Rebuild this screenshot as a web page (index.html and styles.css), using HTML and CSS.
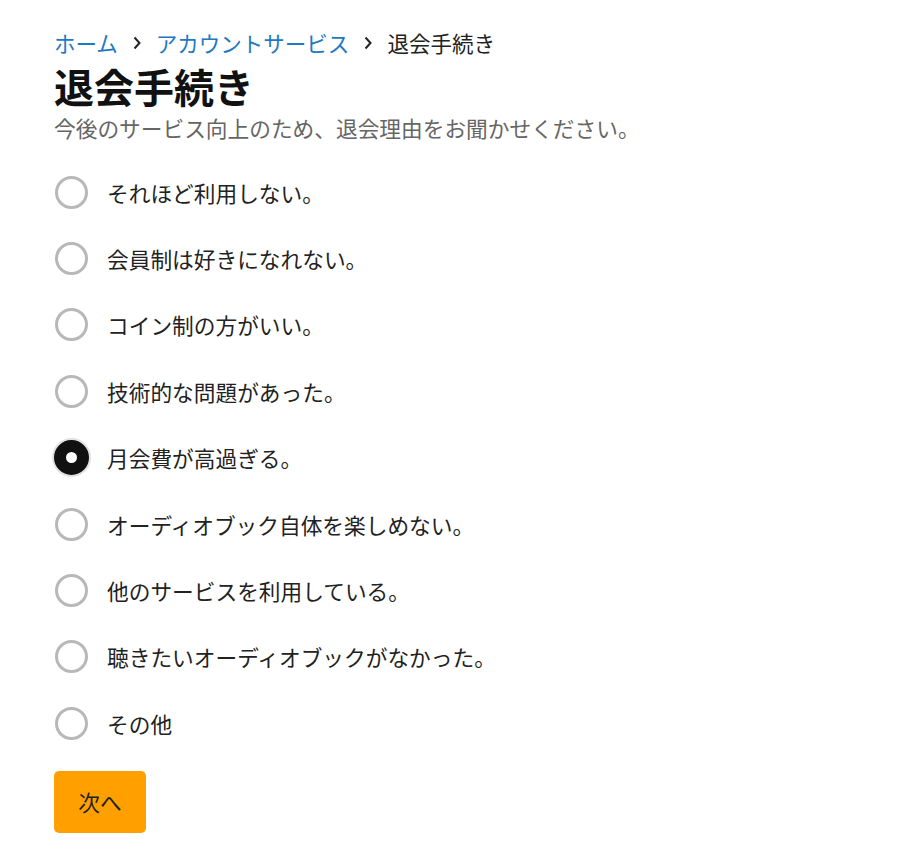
FILE: index.html
```html
<!DOCTYPE html>
<html lang="ja">
<head>
  <meta charset="UTF-8">
  <meta name="viewport" content="width=device-width, initial-scale=1.0">
  <title>退会手続き</title>
  <link rel="stylesheet" href="styles.css">
</head>
<body>
  <div class="container">
    <nav class="breadcrumb">
      <a href="#">ホーム</a>
      <svg class="sep" viewBox="0 0 8 14" width="8" height="14"><path d="M1.5 1.5 L6.5 7 L1.5 12.5" /></svg>
      <a href="#">アカウントサービス</a>
      <svg class="sep" viewBox="0 0 8 14" width="8" height="14"><path d="M1.5 1.5 L6.5 7 L1.5 12.5" /></svg>
      <span class="current">退会手続き</span>
    </nav>
    <h1>退会手続き</h1>
    <p class="lead">今後のサービス向上のため、退会理由をお聞かせください。</p>

    <form class="reasons">
      <label class="reason"><input type="radio" name="reason"><span class="mark"></span>それほど利用しない。</label>
      <label class="reason"><input type="radio" name="reason"><span class="mark"></span>会員制は好きになれない。</label>
      <label class="reason"><input type="radio" name="reason"><span class="mark"></span>コイン制の方がいい。</label>
      <label class="reason"><input type="radio" name="reason"><span class="mark"></span>技術的な問題があった。</label>
      <label class="reason"><input type="radio" name="reason" checked><span class="mark"></span>月会費が高過ぎる。</label>
      <label class="reason"><input type="radio" name="reason"><span class="mark"></span>オーディオブック自体を楽しめない。</label>
      <label class="reason"><input type="radio" name="reason"><span class="mark"></span>他のサービスを利用している。</label>
      <label class="reason"><input type="radio" name="reason"><span class="mark"></span>聴きたいオーディオブックがなかった。</label>
      <label class="reason"><input type="radio" name="reason"><span class="mark"></span>その他</label>
      <div class="form-actions">
        <button type="button">次へ</button>
      </div>
    </form>
  </div>
</body>
</html>
```

FILE: styles.css
```css
body {
  font-family: "Noto Sans CJK JP", "Noto Sans", sans-serif;
  margin: 0;
  padding: 0;
  background-color: #fff;
  color: #1a1a1a;
}
.container {
  padding: 28px 54px 20px;
}
.breadcrumb {
  display: flex;
  align-items: center;
  gap: 15px;
  font-size: 21.5px;
  line-height: 30px;
}
.breadcrumb a {
  color: #2079c2;
  text-decoration: none;
}
.breadcrumb .sep {
  fill: none;
  stroke: #222;
  stroke-width: 2;
}
.breadcrumb .current {
  color: #222;
}
h1 {
  margin: 0;
  font-size: 40px;
  line-height: 56px;
  font-weight: bold;
  color: #111;
}
.lead {
  margin: 0 0 17px;
  font-size: 21.7px;
  line-height: 28px;
  color: #666;
}
.reasons {
  display: flex;
  flex-direction: column;
}
.reason {
  display: flex;
  align-items: center;
  height: 66.4px;
  font-size: 21.7px;
  color: #222;
  cursor: pointer;
}
.reason input {
  display: none;
}
.mark {
  width: 33px;
  height: 33px;
  box-sizing: border-box;
  border: 3px solid #b8b8b8;
  border-radius: 50%;
  margin: 0 19px 0 1px;
  flex-shrink: 0;
}
.reason input:checked + .mark {
  width: 35px;
  height: 35px;
  margin: 0 18px 0 0;
  border: 12px solid #111;
  background-color: #fff;
  box-shadow: 0 0 0 2px #e2e2e2;
}
.form-actions {
  margin-top: 14px;
}
.form-actions button {
  width: 92px;
  height: 62px;
  background-color: #ffa000;
  color: #222;
  border: none;
  border-radius: 5px;
  font-family: inherit;
  font-size: 21.7px;
  cursor: pointer;
}
```
